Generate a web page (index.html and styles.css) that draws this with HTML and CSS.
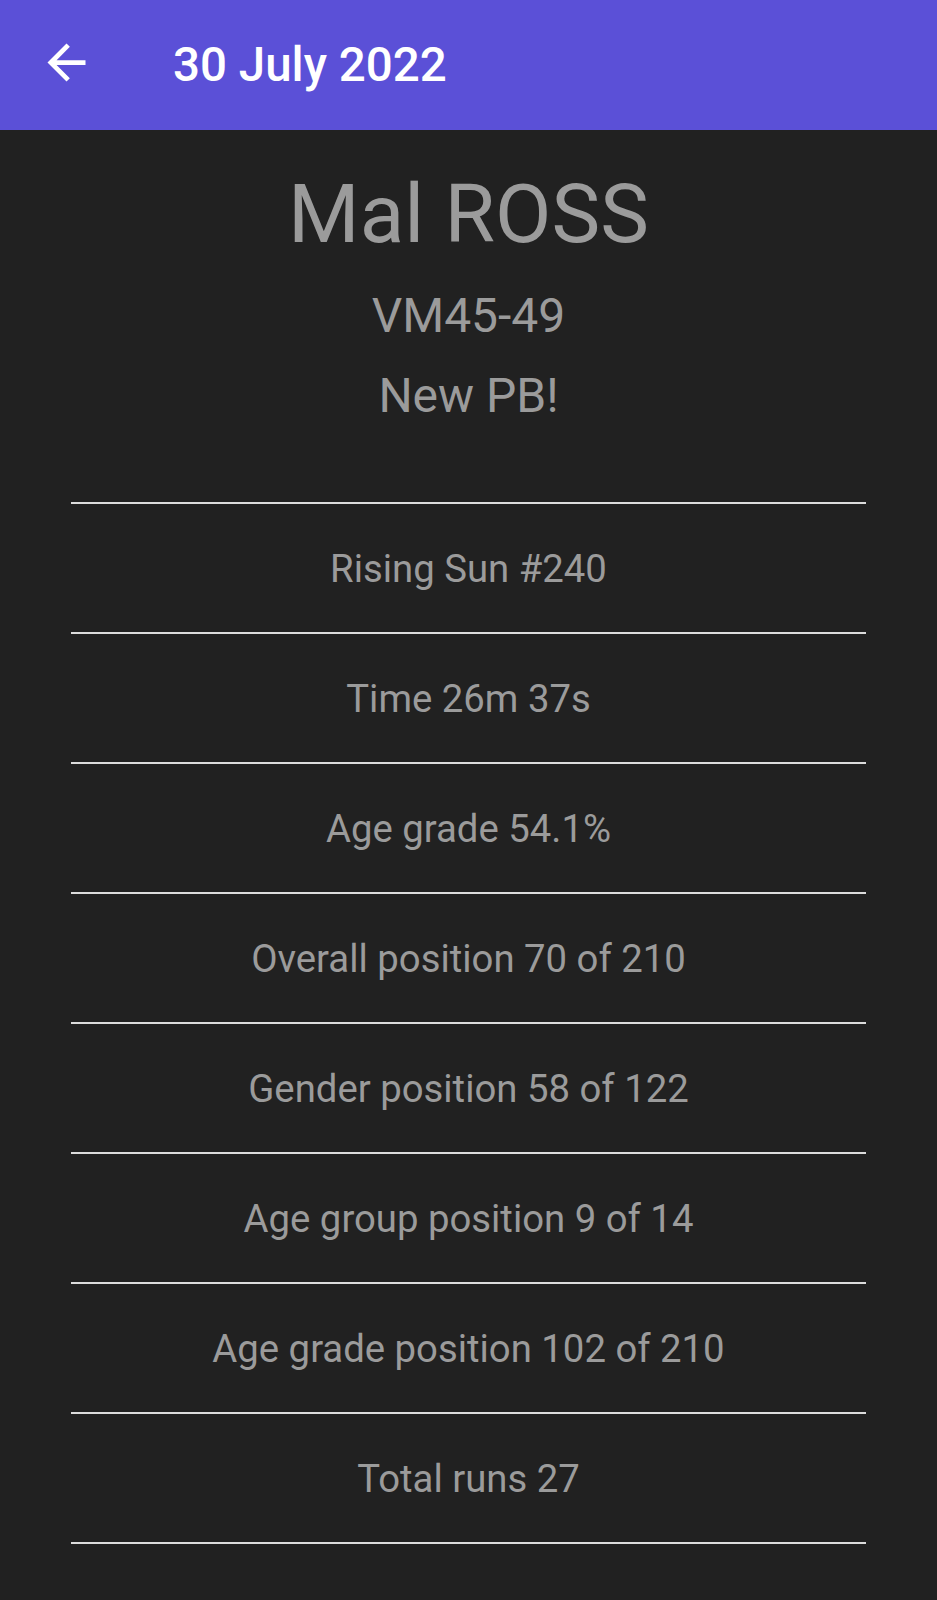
FILE: index.html
```html
<!DOCTYPE html>
<html lang="en">
<head>
  <meta charset="UTF-8" />
  <meta name="viewport" content="width=device-width, initial-scale=1.0" />
  <title>30 July 2022</title>
  <link rel="stylesheet" href="styles.css">
</head>
<body>
  <header class="app-bar">
    <svg class="back-icon" viewBox="0 0 24 24">
      <path d="M20 11H7.83l5.59-5.59L12 4l-8 8 8 8 1.41-1.41L7.83 13H20v-2z" fill="#fff" />
    </svg>
    <h1 class="app-title">30 July 2022</h1>
  </header>

  <main class="result">
    <h2 class="runner-name">Mal ROSS</h2>
    <p class="runner-sub">VM45-49</p>
    <p class="runner-sub pb">New PB!</p>

    <ul class="stats">
      <li>Rising Sun #240</li>
      <li>Time 26m 37s</li>
      <li>Age grade 54.1%</li>
      <li>Overall position 70 of 210</li>
      <li>Gender position 58 of 122</li>
      <li>Age group position 9 of 14</li>
      <li>Age grade position 102 of 210</li>
      <li>Total runs 27</li>
    </ul>
  </main>
</body>
</html>
```

FILE: styles.css
```css
body {
  margin: 0;
  padding: 0;
  background-color: #212121;
  font-family: Roboto, "Noto Sans", Arial, sans-serif;
  color: #9b9b9b;
  min-height: 1600px;
}

.app-bar {
  display: flex;
  align-items: center;
  height: 130px;
  padding-left: 38px;
  background-color: #5b50d7;
  box-sizing: border-box;
}

.back-icon {
  width: 57px;
  height: 57px;
  margin-bottom: 6px;
  flex-shrink: 0;
}

.app-title {
  margin: 0 0 0 78px;
  font-size: 47.5px;
  font-weight: 500;
  color: #fff;
  line-height: 56px;
}

.result {
  text-align: center;
  padding: 36px 71px 0;
}

.runner-name {
  margin: 0;
  font-size: 82px;
  font-weight: 400;
  line-height: 96px;
}

.runner-sub {
  margin: 26px 0 0;
  font-size: 48px;
  line-height: 56px;
}

.runner-sub.pb {
  margin-top: 24px;
}

.stats {
  list-style: none;
  margin: 78px 0 0;
  padding: 0;
  border-bottom: 2px solid #dcdcdc;
}

.stats li {
  height: 128px;
  line-height: 130px;
  border-top: 2px solid #dcdcdc;
  font-size: 38.3px;
}
```
